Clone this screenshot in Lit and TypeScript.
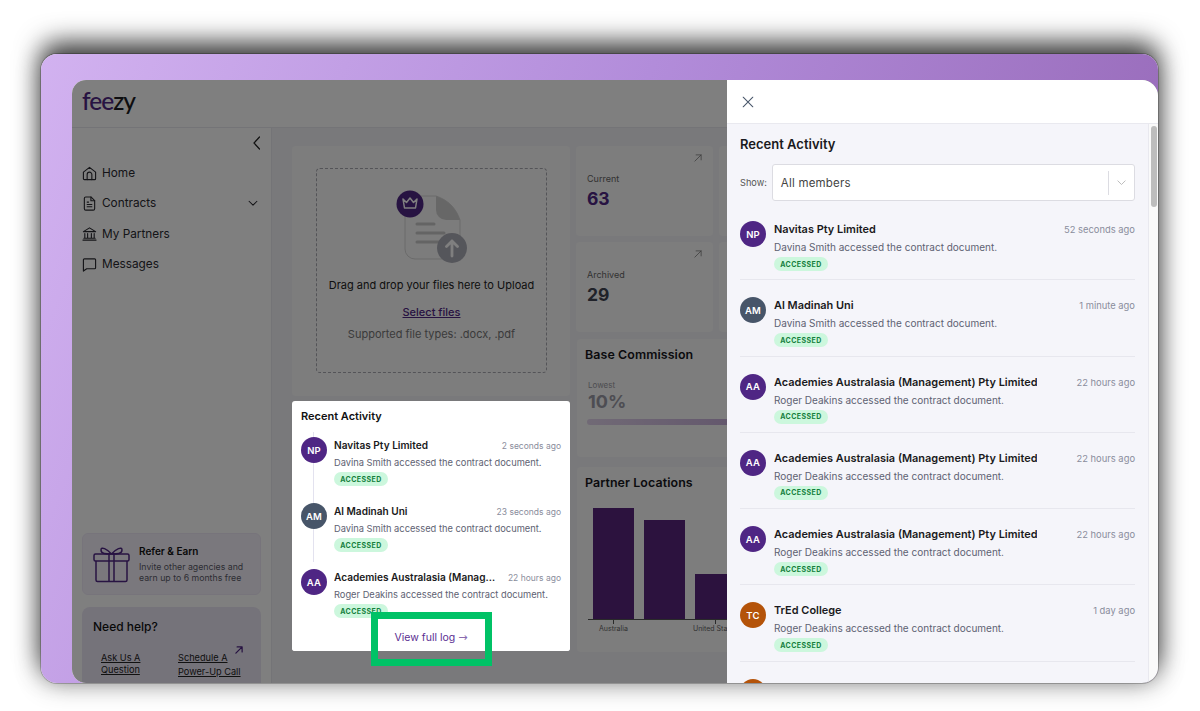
import { LitElement, html, css, svg } from "lit";
import { customElement } from "lit/decorators.js";

const PURPLE = "#4f2684";
const drawerItems = [
  { i: "NP", c: PURPLE, n: "Navitas Pty Limited", t: "52 seconds ago", d: "Davina Smith accessed the contract document." },
  { i: "AM", c: "#475569", n: "Al Madinah Uni", t: "1 minute ago", d: "Davina Smith accessed the contract document." },
  { i: "AA", c: PURPLE, n: "Academies Australasia (Management) Pty Limited", t: "22 hours ago", d: "Roger Deakins accessed the contract document." },
  { i: "AA", c: PURPLE, n: "Academies Australasia (Management) Pty Limited", t: "22 hours ago", d: "Roger Deakins accessed the contract document." },
  { i: "AA", c: PURPLE, n: "Academies Australasia (Management) Pty Limited", t: "22 hours ago", d: "Roger Deakins accessed the contract document." },
  { i: "TC", c: "#b45309", n: "TrEd College", t: "1 day ago", d: "Roger Deakins accessed the contract document." },
  { i: "", c: "#b45309", n: "", t: "", d: "" },
];
const popupItems = [
  { i: "NP", c: PURPLE, n: "Navitas Pty Limited", t: "2 seconds ago", d: "Davina Smith accessed the contract document." },
  { i: "AM", c: "#475569", n: "Al Madinah Uni", t: "23 seconds ago", d: "Davina Smith accessed the contract document." },
  { i: "AA", c: PURPLE, n: "Academies Australasia (Management) Pty Limited", t: "22 hours ago", d: "Roger Deakins accessed the contract document." },
];
const bars = [111, 99, 45, 30];

const ic = (p: unknown, w = 14) => html`<svg class="ic" width=${w} height=${w} viewBox="0 0 16 16" fill="none" stroke="currentColor" stroke-width="1.2" stroke-linecap="round" stroke-linejoin="round">${p}</svg>`;

@customElement("app-root")
export class AppRoot extends LitElement {
  static styles = css`
    :host { display: block; height: 711px; overflow: hidden; background: #fff; font-family: Inter, "Noto Sans", sans-serif; color: #1c1c22; }
    * { box-sizing: border-box; }
    .page { height: 711px; padding: 54px 42px 28px 41px; }
    .frame { height: 629px; padding: 26px 0 0 31px; border-radius: 16px; background: linear-gradient(112deg, #d2b2f0 0%, #b28cda 45%, #9061b0 100%); box-shadow: 0 0 0 1px rgba(0,0,0,.22), 0 -12px 26px rgba(0,0,0,.72), 0 2px 26px rgba(0,0,0,.3); display: flex; }
    .app { position: relative; flex: 1; overflow: hidden; border-radius: 14px 16px 16px 14px; background: #f4f4f8; display: flex; flex-direction: column; }
    .head { height: 48px; flex: none; background: #fff; border-bottom: 1px solid #e8e8ee; padding: 6px 0 0 10px; }
    .logo { font-family: Lato, sans-serif; font-size: 24.5px; line-height: 30px; letter-spacing: -1px; font-weight: 500; color: #1c1c22; }
    .logo b { font-weight: 500; color: #4f2684; }
    .body { flex: 1; display: flex; min-height: 0; }
    .side { width: 200px; flex: none; background: #fff; border-right: 1px solid #e8e8ee; padding: 0 10px; display: flex; flex-direction: column; }
    .collapse { height: 30px; display: flex; justify-content: flex-end; align-items: center; color: #222; margin-right: -4px; padding-bottom: 1px; }
    .nav { display: flex; flex-direction: column; }
    .nav a { height: 30.3px; display: flex; align-items: center; gap: 5px; font-size: 11.8px; color: #2a2a30; }
    .nav .chev { margin-right: 1px; display: flex; }
    .grow { flex: 1; }
    .refer { height: 62px; background: #f5f1fb; border: 1px solid #eee8f6; border-radius: 6px; display: flex; align-items: center; padding: 0 0 0 10px; gap: 9px; }
    .refer h4 { margin: 0 0 5px; font-size: 10px; line-height: 12px; font-weight: 600; color: #111; }
    .refer p { margin: 0; font-size: 8.75px; line-height: 10.5px; color: #5b5b68; }
    .help { margin-top: 12px; height: 76px; flex: none; background: #ebe6f5; border-radius: 8px 8px 0 0; padding: 12px 11px 0; }
    .help h4 { margin: 0; font-size: 12px; line-height: 16px; font-weight: 500; color: #111; }
    .links { display: flex; margin-top: 15px; padding-left: 8px; font-size: 9.2px; color: #222; text-decoration: underline; }
    .links .a { width: 76px; line-height: 12px; margin-top: 2px; }
    .links .b { line-height: 14px; position: relative; margin: -1px 0 0 1px; }
    .links svg { position: absolute; left: 56px; top: -4px; color: #4f2684; stroke-width: 2; }
    .main { flex: 1; display: flex; padding: 18px 0 0 20px; gap: 6px; background: #f3f3f7; }
    .upload { width: 278px; height: 250px; flex: none; background: #fafafa; border-radius: 4px; padding: 22px 23px 0 24px; }
    .drop { height: 205px; border: 1px dashed #a8a8b0; border-radius: 4px; display: flex; flex-direction: column; align-items: center; padding-top: 21px; }
    .drop .t { margin-top: 13px; font-size: 11px; line-height: 16px; color: #222; }
    .drop .s { margin-top: 12px; font-size: 11px; line-height: 15px; font-weight: 500; color: #4f2684; text-decoration: underline; }
    .drop .u { margin-top: 7px; font-size: 11px; line-height: 15px; color: #777; }
    .right { flex: none; width: 300px; display: flex; flex-direction: column; }
    .stats { display: grid; grid-template-columns: 137px 137px; gap: 6px; }
    .stat { height: 90px; background: #fafafa; border-radius: 4px; padding: 27px 0 0 11px; position: relative; }
    .stat .l { font-size: 9px; line-height: 12px; color: #666; }
    .stat .v { font-size: 17.5px; line-height: 20px; font-weight: 700; color: #4f2684; margin-top: 4px; }
    .stat .v.g { color: #414552; }
    .stat svg { position: absolute; top: 7px; right: 10px; color: #777; }
    .card { background: #fafafa; border-radius: 4px; margin-left: 1px; padding: 8px 0 0 8px; }
    .card h3 { margin: 0; font-size: 12.4px; line-height: 16px; font-weight: 600; color: #17171c; letter-spacing: .1px; }
    .base { margin-top: 7px; height: 118px; }
    .base .l { margin: 17px 0 0 3px; font-size: 8px; line-height: 10px; color: #9a9aa2; }
    .base .v { margin: 2px 0 0 3px; font-size: 18px; line-height: 20px; font-weight: 700; color: #9a9aa6; }
    .base .bar { margin: 7px 0 0 2px; height: 6px; border-radius: 3px; background: linear-gradient(90deg, #e2d4ec, #ad8ac8); }
    .partner { margin-top: 10px; height: 185px; }
    .chart { margin: 17px 0 0 3px; padding-left: 5px; height: 112px; display: flex; align-items: flex-end; gap: 10px; border-bottom: 1px solid #555; }
    .chart i { display: block; position: relative; width: 41px; flex: none; background: #58247c; }
    .chart i:nth-child(odd)::after { content: ""; position: absolute; left: 20px; bottom: -5px; width: 1px; height: 4px; background: #555; }
    .labels { display: flex; margin-left: 7px; font-size: 7px; line-height: 9px; color: #666; padding-top: 4px; }
    .labels span:first-child { margin-left: 7px; width: 94px; }
    .overlay { position: absolute; inset: 0; background: rgba(0,0,0,.5); }

    .popup { position: absolute; left: 220px; top: 321px; width: 278px; height: 250px; background: #fff; border-radius: 3px; padding: 8px 9px; overflow: hidden; }
    .popup h3 { margin: 0 0 13px; font-size: 11px; line-height: 15px; font-weight: 600; color: #111; }
    .plist { position: relative; }
    .plist::before { content: ""; position: absolute; left: 12px; top: -5px; height: 130px; width: 1px; background: #e3e2ef; }
    .pitem { position: relative; display: flex; gap: 7px; height: 66px; }
    .av { width: 26px; height: 26px; flex: none; border-radius: 50%; color: #fff; display: flex; align-items: center; justify-content: center; font-size: 9.5px; font-weight: 600; letter-spacing: .2px; }
    .b { flex: 1; min-width: 0; padding-top: 2px; }
    .row { display: flex; justify-content: space-between; align-items: baseline; gap: 10px; }
    .n { font-weight: 600; color: #1a1a20; white-space: nowrap; overflow: hidden; text-overflow: ellipsis; min-width: 0; }
    .tm { color: #8a8d9c; white-space: nowrap; flex: none; }
    .d { color: #5e6272; white-space: nowrap; }
    .pitem .n { font-size: 10.1px; line-height: 12px; }
    .pitem .tm { font-size: 8.5px; }
    .pitem .d { font-size: 9.3px; line-height: 12px; margin-top: 6px; }
    .badge { display: flex; align-items: center; justify-content: center; width: 54px; height: 14px; border-radius: 7px; background: #ccf7dd; color: #15803d; font-size: 7px; font-weight: 700; letter-spacing: .45px; }
    .pitem .badge { margin-top: 3px; }
    .foot { position: absolute; left: 0; right: 0; bottom: 0; height: 32px; background: #fff; display: flex; align-items: center; justify-content: center; font-size: 10.5px; color: #5a2d91; padding-top: 4px; }
    .foot span { color: #8a6bb0; font-family: "DejaVu Sans", sans-serif; font-size: 11px; }
    .mark { position: absolute; left: 299px; top: 532px; width: 121px; height: 54px; border: 7px solid #00c266; }

    .drawer { position: absolute; right: 0; top: 0; bottom: 0; width: 431px; background: #f5f5fa; display: flex; flex-direction: column; border-radius: 0 16px 16px 0; overflow: hidden; }
    .dhead { height: 44px; flex: none; background: #fff; border-bottom: 1px solid #e9e9ef; display: flex; align-items: center; padding-left: 14px; color: #475569; }
    .dbody { flex: 1; display: flex; min-height: 0; }
    .dcontent { flex: 1; padding: 11px 13px 0; overflow: hidden; }
    .dcontent h2 { margin: 0; font-size: 13px; line-height: 18px; font-weight: 600; color: #1a1a20; }
    .show { display: flex; align-items: center; gap: 5px; margin-top: 11px; font-size: 9.2px; color: #555; }
    .select { flex: 1; height: 37px; background: #fff; border: 1px solid #dcdce2; border-radius: 3px; display: flex; align-items: center; padding-left: 8px; font-size: 11.5px; color: #444; letter-spacing: .2px; }
    .select .sep { width: 1px; height: 24px; background: #dcdce2; margin-right: 6px; }
    .select svg { color: #bbb; margin-right: 6px; }
    .dlist { margin-top: 3px; }
    .ditem { display: flex; gap: 8px; height: 76.25px; padding-top: 17px; border-bottom: 1px solid #e7e7ee; flex: none; }
    .ditem .n { font-size: 10.95px; line-height: 13px; }
    .ditem .tm { font-size: 9.4px; }
    .ditem .d { font-size: 10px; line-height: 12px; margin-top: 5px; }
    .ditem .badge { margin-top: 4px; }
    .scroll { width: 10px; flex: none; background: #fafafa; border-left: 1px solid #e9e9ef; padding: 2px 1px 0 2px; }
    .scroll div { height: 81px; background: #bdbdbd; border-radius: 4px; }
  `;

  private docIcon() {
    return html`<svg width="72" height="74" viewBox="0 0 72 74" fill="none">
      <path d="M17 6H40C52 10 60 18 64 30V59a10 10 0 0 1-10 10H19A10 10 0 0 1 9 59V14a8 8 0 0 1 8-8z" fill="#f8f8f8" stroke="#d6d6d6"/>
      <path d="M40 6C52 10 60 18 64 30H50A10 10 0 0 1 40 20z" fill="#cfcfcf"/>
      <path d="M21 34H38M21 43H48M21 52H46" stroke="#c8c8c8" stroke-width="3" stroke-linecap="round"/>
      <circle cx="14" cy="14" r="13.5" fill="#4f2684"/>
      <path d="M7 9l3.5 3.5L14 8l3.5 4.500L21 9l-1.500 9h-11z" stroke="#fff" stroke-width="1.500" stroke-linejoin="round"/>
      <circle cx="56" cy="58" r="15" fill="#abacb6"/>
      <path d="M56 66V51M50.500 56.500L56 51l5.500 5.500" stroke="#fff" stroke-width="2.800" stroke-linecap="round" stroke-linejoin="round"/>
    </svg>`;
  }

  private arrow(size = 12) {
    return ic(svg`<path d="M3 13L13 3M5 3h8v8"/>`, size);
  }

  render() {
    return html`<div class="page"><div class="frame"><div class="app">
      <div class="head"><div class="logo"><b>fee</b>zy</div></div>
      <div class="body">
        <aside class="side">
          <div class="collapse">${ic(svg`<path d="M10.500 2L5 8l5.500 6"/>`, 16)}</div>
          <nav class="nav">
            <a>${ic(svg`<path d="M1.500 6.500L8 1.500l6.500 5v7a1 1 0 0 1-1 1h-11a1 1 0 0 1-1-1z"/><path d="M5.500 14.500V9a2.500 2.500 0 0 1 5 0v5.500"/>`, 15)}Home</a>
            <a>${ic(svg`<path d="M2.500 2.500a1.500 1.500 0 0 1 1.500-1.500h5.500L13.500 5v8.500A1.500 1.500 0 0 1 12 15H4a1.500 1.500 0 0 1-1.500-1.500z"/><path d="M9.500 1v4h4M5.500 9h5M5.500 11.500h5M5.500 6.500h1.500"/>`, 15)}Contracts<span class="grow"></span><span class="chev">${ic(svg`<path d="M3.500 6L8 10.500 12.500 6"/>`)}</span></a>
            <a>${ic(svg`<path d="M1.500 6L8 2l6.500 4zM3 8v4.500M6 8v4.500M10 8v4.500M13 8v4.500M2 13h12M1 15h14"/>`, 15)}My Partners</a>
            <a>${ic(svg`<path d="M1.500 3a1 1 0 0 1 1-1h11a1 1 0 0 1 1 1v8.500a1 1 0 0 1-1 1H5L1.500 15z"/>`, 15)}Messages</a>
          </nav>
          <div class="grow"></div>
          <div class="refer">
            <svg width="37" height="37" viewBox="0 0 37 37" fill="none" stroke="#4f2684" stroke-width="1.500" stroke-linejoin="round">
              <rect x="1" y="8" width="35" height="7" rx="1.500"/><path d="M3 15v19a1.500 1.500 0 0 0 1.500 1.500h28A1.500 1.500 0 0 0 34 34V15M16 8v27.500M21 8v27.500M18.500 8C14 3 8 0 8 4s5 4 10.500 4zM18.500 8C23 3 29 0 29 4s-5 4-10.500 4z"/>
            </svg>
            <div><h4>Refer &amp; Earn</h4><p>Invite other agencies and<br />earn up to 6 months free</p></div>
          </div>
          <div class="help">
            <h4>Need help?</h4>
            <div class="links">
              <div class="a">Ask Us A<br />Question</div>
              <div class="b">Schedule A<br />Power-Up Call${this.arrow(10)}</div>
            </div>
          </div>
        </aside>
        <section class="main">
          <div class="upload"><div class="drop">
            ${this.docIcon()}
            <div class="t">Drag and drop your files here to Upload</div>
            <div class="s">Select files</div>
            <div class="u">Supported file types: .docx, .pdf</div>
          </div></div>
          <div class="right">
            <div class="stats">
              <div class="stat">${this.arrow(10)}<div class="l">Current</div><div class="v">63</div></div>
              <div class="stat"></div>
              <div class="stat">${this.arrow(10)}<div class="l">Archived</div><div class="v g">29</div></div>
              <div class="stat"></div>
            </div>
            <div class="card base"><h3>Base Commission</h3><div class="l">Lowest</div><div class="v">10%</div><div class="bar"></div></div>
            <div class="card partner"><h3>Partner Locations</h3>
              <div class="chart">${bars.map((h) => html`<i style="height:${h}px"></i>`)}</div>
              <div class="labels"><span>Australia</span><span>United States</span></div>
            </div>
          </div>
        </section>
      </div>
      <div class="overlay"></div>
      <div class="popup">
        <h3>Recent Activity</h3>
        <div class="plist">
          ${popupItems.map((x) => html`<div class="pitem">
            <div class="av" style="background:${x.c}">${x.i}</div>
            <div class="b"><div class="row"><div class="n">${x.n}</div><div class="tm">${x.t}</div></div><div class="d">${x.d}</div><div class="badge">ACCESSED</div></div>
          </div>`)}
        </div>
        <div class="foot">View full log&nbsp;<span>→</span></div>
      </div>
      <div class="mark"></div>
      <aside class="drawer">
        <div class="dhead">${ic(svg`<path d="M2.500 2.500l11 11M13.500 2.500l-11 11"/>`, 14)}</div>
        <div class="dbody">
          <div class="dcontent">
            <h2>Recent Activity</h2>
            <div class="show">Show:<div class="select">All members<span class="grow"></span><span class="sep"></span>${ic(svg`<path d="M3.500 6L8 10.500 12.500 6"/>`, 13)}</div></div>
            <div class="dlist">
              ${drawerItems.map((x) => html`<div class="ditem">
                <div class="av" style="background:${x.c}">${x.i}</div>
                ${x.n ? html`<div class="b"><div class="row"><div class="n">${x.n}</div><div class="tm">${x.t}</div></div><div class="d">${x.d}</div><div class="badge">ACCESSED</div></div>` : ""}
              </div>`)}
            </div>
          </div>
          <div class="scroll"><div></div></div>
        </div>
      </aside>
    </div></div></div>`;
  }
}
